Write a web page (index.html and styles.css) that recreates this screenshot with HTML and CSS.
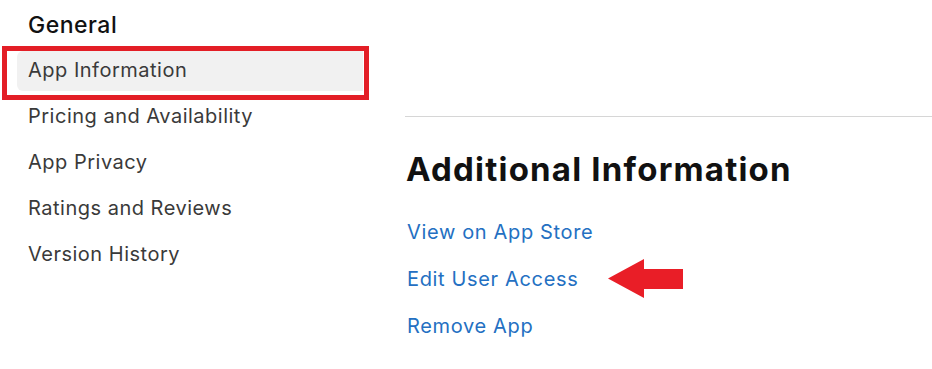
FILE: index.html
```html
<!DOCTYPE html>
<html lang="en">
<head>
    <meta charset="UTF-8">
    <meta name="viewport" content="width=device-width, initial-scale=1.0">
    <title>App Information</title>
    <link rel="stylesheet" href="styles.css">
</head>
<body>
    <div class="page">
        <aside class="sidebar">
            <h2 class="sidebar__title">General</h2>
            <ul class="sidebar__menu">
                <li class="sidebar__item sidebar__item_active">
                    App Information
                    <span class="mark-box"></span>
                </li>
                <li class="sidebar__item">Pricing and Availability</li>
                <li class="sidebar__item">App Privacy</li>
                <li class="sidebar__item">Ratings and Reviews</li>
                <li class="sidebar__item">Version History</li>
            </ul>
        </aside>

        <main class="content">
            <hr class="content__divider">
            <h1 class="content__title">Additional Information</h1>
            <ul class="links">
                <li class="links__row"><a href="#" class="links__item">View on App Store</a></li>
                <li class="links__row">
                    <a href="#" class="links__item">Edit User Access</a>
                    <svg class="mark-arrow" xmlns="http://www.w3.org/2000/svg" viewBox="0 0 75 40" width="75" height="40">
                        <polygon points="0,19.5 36,0 36,10 75,10 75,30 36,30 36,39" />
                    </svg>
                </li>
                <li class="links__row"><a href="#" class="links__item">Remove App</a></li>
            </ul>
        </main>
    </div>
</body>
</html>
```

FILE: styles.css
```css
* {
    box-sizing: border-box;
}
body {
    margin: 0;
    background: #fff;
    font-family: Inter, "Noto Sans", sans-serif;
    color: #3a3a3a;
}
.page {
    display: flex;
    width: 932px;
    height: 369px;
    overflow: hidden;
}

/* sidebar */
.sidebar {
    width: 405px;
    flex-shrink: 0;
    padding-top: 10px;
}
.sidebar__title {
    margin: 0 0 11px 28px;
    font-size: 23px;
    font-weight: 500;
    line-height: 30px;
    letter-spacing: 0.5px;
    color: #111;
}
.sidebar__menu {
    list-style: none;
    margin: 0;
    padding: 0 0 0 17px;
    width: 363px;
}
.sidebar__item {
    position: relative;
    height: 40px;
    line-height: 38px;
    margin-bottom: 5.9px;
    padding-left: 11px;
    font-size: 20px;
    letter-spacing: 0.5px;
    border-radius: 6px 0 0 6px;
}
.sidebar__item_active {
    background-color: #f1f1f1;
}

/* annotation: red frame round the active item */
.mark-box {
    position: absolute;
    left: -15px;
    top: -5px;
    right: -6px;
    bottom: -9px;
    border: 5px solid #e31e26;
    pointer-events: none;
}

/* content */
.content {
    flex: 1;
    padding-top: 116px;
}
.content__divider {
    margin: 0;
    border: none;
    border-top: 1px solid #d6d6d6;
}
.content__title {
    margin: 30px 0 0 1px;
    font-size: 33px;
    font-weight: 700;
    line-height: 44px;
    color: #111;
    letter-spacing: 1.2px;
}
.links {
    list-style: none;
    margin: 17px 0 0 2px;
    padding: 0;
}
.links__row {
    display: flex;
    align-items: center;
    height: 47px;
}
.links__item {
    font-size: 20px;
    letter-spacing: 0.65px;
    color: #2470c2;
    text-decoration: none;
}
.mark-arrow {
    margin-left: 30px;
    fill: #e91e27;
}
```
